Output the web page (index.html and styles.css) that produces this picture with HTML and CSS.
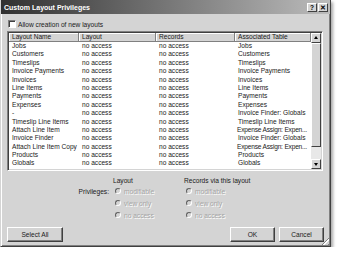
FILE: index.html
```html
<!DOCTYPE html>
<html lang="en">
<head>
  <meta charset="utf-8">
  <title>Custom Layout Privileges</title>
  <link rel="stylesheet" href="styles.css">
</head>
<body>

  <div class="window">

    <!-- Title bar -->
    <div class="titlebar">
      <span class="title">Custom Layout Privileges</span>
      <span class="tbtns">
        <span class="tbtn">?</span>
        <span class="tbtn">&#x2715;</span>
      </span>
    </div>

    <div class="content">

      <label class="check"><span class="box"></span>Allow creation of new layouts</label>

      <!-- Layout list -->
      <div class="list">
        <div class="table">
          <div class="row head">
            <span>Layout Name</span><span>Layout</span><span>Records</span><span>Associated Table</span>
          </div>
          <div class="row"><span>Jobs</span><span>no access</span><span>no access</span><span>Jobs</span></div>
          <div class="row"><span>Customers</span><span>no access</span><span>no access</span><span>Customers</span></div>
          <div class="row"><span>Timeslips</span><span>no access</span><span>no access</span><span>Timeslips</span></div>
          <div class="row"><span>Invoice Payments</span><span>no access</span><span>no access</span><span>Invoice Payments</span></div>
          <div class="row"><span>Invoices</span><span>no access</span><span>no access</span><span>Invoices</span></div>
          <div class="row"><span>Line Items</span><span>no access</span><span>no access</span><span>Line Items</span></div>
          <div class="row"><span>Payments</span><span>no access</span><span>no access</span><span>Payments</span></div>
          <div class="row"><span>Expenses</span><span>no access</span><span>no access</span><span>Expenses</span></div>
          <div class="row"><span>-</span><span>no access</span><span>no access</span><span>Invoice Finder: Globals</span></div>
          <div class="row"><span>Timeslip Line Items</span><span>no access</span><span>no access</span><span>Timeslip Line Items</span></div>
          <div class="row"><span>Attach Line Item</span><span>no access</span><span>no access</span><span class="tight">Expense Assign: Expen...</span></div>
          <div class="row"><span>Invoice Finder</span><span>no access</span><span>no access</span><span>Invoice Finder: Globals</span></div>
          <div class="row"><span>Attach Line Item Copy</span><span>no access</span><span>no access</span><span class="tight">Expense Assign: Expen...</span></div>
          <div class="row"><span>Products</span><span>no access</span><span>no access</span><span>Products</span></div>
          <div class="row"><span>Globals</span><span>no access</span><span>no access</span><span>Globals</span></div>
        </div>
        <div class="scroll">
          <span class="sbtn up"></span>
          <span class="thumb"></span>
          <span class="track"></span>
          <span class="sbtn down"></span>
        </div>
      </div>

      <!-- Privileges -->
      <div class="privs">
        <span></span>
        <span>Layout</span>
        <span>Records via this layout</span>

        <span class="plabel">Privileges:</span>
        <span class="radio"><i></i>modifiable</span>
        <span class="radio"><i></i>modifiable</span>

        <span></span>
        <span class="radio"><i></i>view only</span>
        <span class="radio"><i></i>view only</span>

        <span></span>
        <span class="radio"><i></i>no access</span>
        <span class="radio"><i></i>no access</span>
      </div>

      <div class="buttons">
        <button class="btn wide">Select All</button>
        <span class="spacer"></span>
        <button class="btn">OK</button>
        <button class="btn">Cancel</button>
      </div>

    </div>

    <span class="grip"></span>
  </div>

</body>
</html>
```

FILE: styles.css
```css
body { margin: 0; background: #fff; font-family: "Liberation Sans", Arial, sans-serif; font-size: 6.6px; color: #1a1a1a; }

.window { position: relative; width: 331px; height: 247px; box-sizing: border-box; background: #d4d4d4; border: 1px solid #404040; border-top: 0; border-left-color: #d4d4d4; box-shadow: inset 1px 0 #fff, inset -1px -1px #808080, 2px 2px 3px rgba(0,0,0,0.35); }

.titlebar { height: 14px; display: flex; align-items: center; justify-content: space-between; background: linear-gradient(to right, #303030, #bcbcbc); padding: 0 2px 0 3px; }
.title { color: #fff; font-weight: bold; font-size: 7px; }
.tbtns { display: flex; gap: 1px; }
.tbtn { width: 10px; height: 9px; box-sizing: border-box; background: #d4d4d4; border: 1px solid; border-color: #fff #404040 #404040 #fff; font-size: 6.5px; font-weight: bold; line-height: 7px; text-align: center; color: #000; }

.content { padding: 6px 6px 0 6px; }

.check { display: flex; align-items: center; gap: 2px; height: 8px; margin-left: 1px; }
.box { width: 8px; height: 8px; box-sizing: border-box; background: #fff; border: 1px solid; border-color: #808080 #fff #fff #808080; box-shadow: inset 1px 1px #404040; }

.list { display: flex; width: 316px; height: 140px; box-sizing: border-box; margin-top: 3px; padding: 1px; background: #fff; border: 1px solid; border-color: #808080 #fff #fff #808080; box-shadow: inset 1px 1px #404040, inset -1px -1px #d4d4d4; }
.table { width: 302px; height: 136px; overflow: hidden; }
.row { display: grid; grid-template-columns: 70px 77px 79px 76px; height: 8.4px; line-height: 8.4px; white-space: nowrap; }
.row span { padding-left: 3px; overflow: hidden; }
.row span.tight { letter-spacing: -0.2px; padding-left: 2px; }
.row.head { height: 9px; line-height: 9px; background: #d4d4d4; }
.row.head span { box-sizing: border-box; border-right: 1px solid #808080; border-bottom: 1px solid #808080; box-shadow: inset 1px 1px #fff; line-height: 8px; }

.scroll { display: flex; flex-direction: column; width: 10px; height: 136px; background: #e8e8e8; }
.sbtn { position: relative; height: 10px; box-sizing: border-box; background: #d4d4d4; border: 1px solid; border-color: #fff #404040 #404040 #fff; }
.sbtn::after { content: ""; position: absolute; left: 2px; top: 2px; border: 2px solid transparent; }
.sbtn.up::after { border-bottom: 3px solid #000; top: 0; }
.sbtn.down::after { border-top: 3px solid #000; top: 3px; }
.thumb { height: 104px; box-sizing: border-box; background: #d4d4d4; border: 1px solid; border-color: #fff #404040 #404040 #fff; }
.track { flex: 1; }

.privs { display: grid; grid-template-columns: 106px 71px auto; grid-template-rows: 9px 12px 12px 12px; margin-top: 5px; align-items: center; }
.plabel { text-align: right; padding-right: 4px; }
.radio { display: flex; align-items: center; gap: 3px; padding-left: 2px; color: #a4a4a4; text-shadow: 1px 1px 0 #fff; }
.radio i { width: 6px; height: 6px; box-sizing: border-box; border-radius: 50%; background: #d4d4d4; border: 1px solid; border-color: #606060 #fff #fff #606060; }

.buttons { display: flex; gap: 4px; margin-top: 6px; width: 317px; }
.spacer { flex: 1; }
.btn { width: 45px; height: 15px; padding: 0; background: #d4d4d4; border: 1px solid; border-color: #fff #404040 #404040 #fff; box-shadow: inset -1px -1px #808080; font-family: inherit; font-size: 6.6px; color: #1a1a1a; }
.btn.wide { width: 56px; }

.grip { position: absolute; right: 1px; bottom: 1px; width: 8px; height: 8px; background: repeating-linear-gradient(135deg, transparent 0 2px, #808080 2px 3px, #fff 3px 4px); clip-path: polygon(100% 0, 100% 100%, 0 100%); }
```
